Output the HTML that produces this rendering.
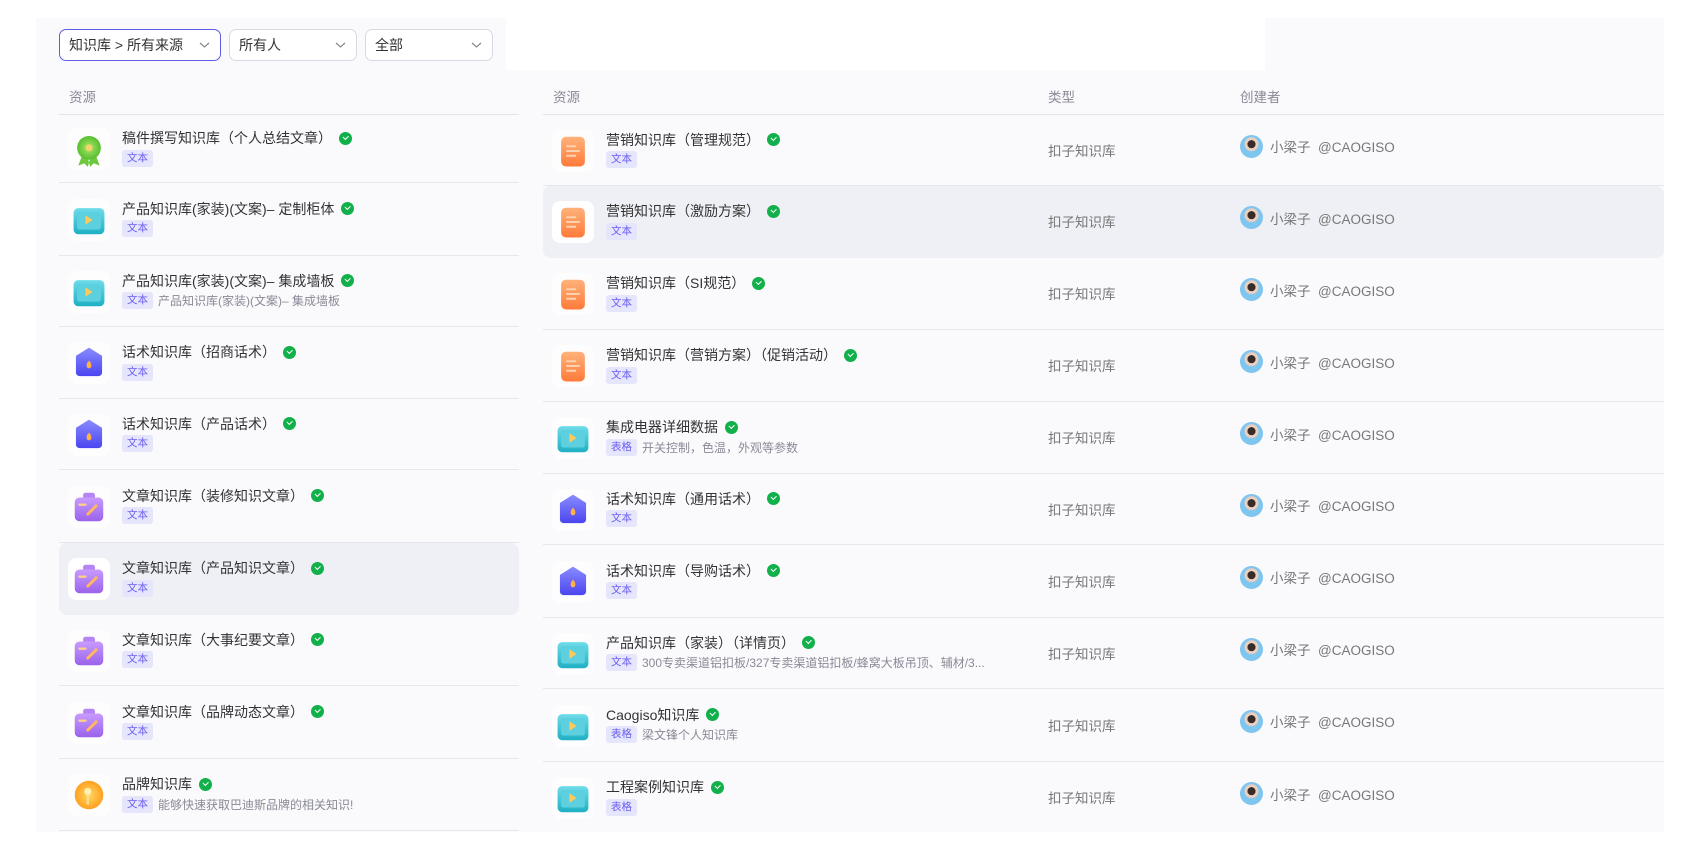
<!DOCTYPE html>
<html><head><meta charset="utf-8"><style>
*{box-sizing:border-box;margin:0;padding:0}
body{width:1700px;height:850px;background:#fff;position:relative;overflow:hidden;font-family:"Liberation Sans","Noto Sans CJK SC",sans-serif;color:#333}
.bg{position:absolute;background:#fafafd}
.dd{position:absolute;top:29px;height:32px;border:1px solid #d9d9e6;border-radius:7px;background:#fff;font-size:14px;line-height:30px;padding-left:9px;color:#333}
.dd.sel{border-color:#5b5ee6}
.dd svg{position:absolute;right:10px;top:11px}
.hd{position:absolute;top:86px;font-size:13.5px;color:#8a8a96}
.row{position:absolute;border-bottom:1px solid #e6e6ee}
.row.hl{background:#eff0f6;border-radius:8px;border-bottom-color:transparent}
.tile{position:absolute;left:9px;width:42px;height:42px;border-radius:8px;background:#fff}
.row:not(.hl) .tile{background:rgba(255,255,255,.6)}
.tile svg{position:absolute;left:2px;top:2px}
.ttl{position:absolute;left:63px;font-size:14px;color:#333;white-space:nowrap;display:flex;align-items:center}
.ck{display:inline-block;width:13px;height:13px;border-radius:50%;background:#12b04a;margin-left:7px;position:relative}
.ck:after{content:"";position:absolute;left:4px;top:3px;width:4px;height:2.5px;border-left:1.5px solid #fff;border-bottom:1.5px solid #fff;transform:rotate(-45deg)}
.sub{position:absolute;left:63px;font-size:12px;color:#8a8a96;white-space:nowrap;display:flex;align-items:center}
.tag{display:inline-block;background:#e5e5fb;color:#6a5ef0;font-size:10.5px;height:17px;line-height:17px;padding:0 5px;border-radius:3px;margin-right:5px}
.typ{position:absolute;left:505px;font-size:13.5px;color:#777}
.usr{position:absolute;left:697px;font-size:13.5px;color:#777;display:flex;align-items:center}
.av{width:23px;height:23px;border-radius:50%;background:radial-gradient(circle at 50% 40%,#3a2b28 0 22%,#e8cfc0 23% 38%,#7ec5ef 40%);margin-right:7px}
</style></head><body>
<div class="bg" style="left:36px;top:18px;width:470px;height:60px"></div>
<div class="bg" style="left:1265px;top:18px;width:399px;height:60px"></div>
<div class="bg" style="left:36px;top:70px;width:1628px;height:762px"></div>

<div class="dd sel" style="left:59px;width:162px">知识库 &gt; 所有来源<svg width="11" height="8" viewBox="0 0 11 8"><path d="M1 2l4.5 4 4.5-4" fill="none" stroke="#888" stroke-width="1.2"/></svg></div>
<div class="dd" style="left:229px;width:128px">所有人<svg width="11" height="8" viewBox="0 0 11 8"><path d="M1 2l4.5 4 4.5-4" fill="none" stroke="#888" stroke-width="1.2"/></svg></div>
<div class="dd" style="left:365px;width:128px">全部<svg width="11" height="8" viewBox="0 0 11 8"><path d="M1 2l4.5 4 4.5-4" fill="none" stroke="#888" stroke-width="1.2"/></svg></div>

<div class="hd" style="left:69px">资源</div>
<div class="hd" style="left:553px">资源</div>
<div class="hd" style="left:1048px">类型</div>
<div class="hd" style="left:1240px">创建者</div>
<div style="position:absolute;left:59px;top:114px;width:460px;border-top:1px solid #e3e3ec"></div>
<div style="position:absolute;left:543px;top:114px;width:1121px;border-top:1px solid #e3e3ec"></div>

<svg width="0" height="0" style="position:absolute">
<defs>
<linearGradient id="gv" x1="0" y1="0" x2="0" y2="1"><stop offset="0" stop-color="#6fdcea"/><stop offset="1" stop-color="#1fb0c4"/></linearGradient>
<linearGradient id="gh" x1="0" y1="0" x2="0" y2="1"><stop offset="0" stop-color="#8a8cff"/><stop offset="1" stop-color="#4a45f0"/></linearGradient>
<linearGradient id="gb" x1="0" y1="0" x2="0" y2="1"><stop offset="0" stop-color="#c89bff"/><stop offset="1" stop-color="#9a62ec"/></linearGradient>
<linearGradient id="go" x1="0" y1="0" x2="0" y2="1"><stop offset="0" stop-color="#ffb27a"/><stop offset="1" stop-color="#ff7a3a"/></linearGradient>
<radialGradient id="gg"><stop offset="0" stop-color="#a8e86a"/><stop offset="1" stop-color="#58be30"/></radialGradient>
<radialGradient id="gy"><stop offset="0" stop-color="#ffd860"/><stop offset="1" stop-color="#ffa020"/></radialGradient>
<g id="i-med"><path d="M10 22l-3 8 5-2 3 3 2-7zM22 22l3 8-5-2-3 3-2-7z" fill="#6cc83c"/><circle cx="16" cy="15" r="10" fill="url(#gg)"/><circle cx="16" cy="15" r="3" fill="#f6d36a"/></g>
<g id="i-vid"><rect x="3" y="6" width="26" height="22" rx="4" fill="url(#gv)"/><rect x="6" y="9" width="20" height="15" rx="2" fill="#5cd0df"/><path d="M13 12v8l6-4z" fill="#ffc85a"/></g>
<g id="i-hex"><path d="M16 3l11 7v14a3 3 0 0 1-3 3H8a3 3 0 0 1-3-3V10z" fill="url(#gh)"/><path d="M16 14c2 2 2 3.5 2 4.5a2 2 0 0 1-4 0c0-1 0-2.5 2-4.5z" fill="#ffb04a"/></g>
<g id="i-bag"><rect x="11" y="4" width="10" height="6" rx="2" fill="#b584f6"/><rect x="4" y="8" width="24" height="20" rx="4" fill="url(#gb)"/><path d="M8 14h5" stroke="#ffd08a" stroke-width="2" stroke-linecap="round"/><path d="M15 22l7-7" stroke="#ffb860" stroke-width="2.5" stroke-linecap="round"/></g>
<g id="i-doc"><rect x="6" y="4" width="20" height="25" rx="4" fill="url(#go)"/><path d="M11 12h7M11 16h10M11 20h7" stroke="#ffd2b0" stroke-width="1.6" stroke-linecap="round"/></g>
<g id="i-bulb"><circle cx="16" cy="16" r="12" fill="url(#gy)"/><circle cx="15" cy="13" r="3" fill="#fff1b0"/><path d="M15 16v8" stroke="#ffe08a" stroke-width="2"/></g>
</defs></svg>

<div id="L"></div>
<div id="R"></div>

<script>
function row(x,w,top,h,ic,title,tag,desc,hl,right,last){
 var mid=h/2;
 var s='<div class="row'+(hl?' hl':'')+'" style="left:'+x+'px;top:'+top+'px;width:'+w+'px;height:'+h+'px'+(last?';border-bottom-color:transparent':'')+'">';
 s+='<div class="tile" style="top:'+(mid-21)+'px"><svg width="38" height="38" viewBox="0 0 32 32"><use href="#i-'+ic+'"/></svg></div>';
 s+='<div class="ttl" style="top:'+(mid-21)+'px;height:20px">'+title+'<span class="ck"></span></div>';
 if(tag) s+='<div class="sub" style="top:'+(mid)+'px;height:18px"><span class="tag">'+tag+'</span>'+(desc||'')+'</div>';
 if(right){s+='<div class="typ" style="top:'+(mid-11)+'px">扣子知识库</div><div class="usr" style="top:'+(mid-16)+'px"><span class="av"></span>小梁子&nbsp; @CAOGISO</div>';}
 return s+'</div>';
}
var Ly=[115,183,256,327,399,470,543,615,686,759,831];
var Ld=[["med","稿件撰写知识库（个人总结文章）","文本"],["vid","产品知识库(家装)(文案)– 定制柜体","文本"],["vid","产品知识库(家装)(文案)– 集成墙板","文本","产品知识库(家装)(文案)– 集成墙板"],["hex","话术知识库（招商话术）","文本"],["hex","话术知识库（产品话术）","文本"],["bag","文章知识库（装修知识文章）","文本"],["bag","文章知识库（产品知识文章）","文本",null,1],["bag","文章知识库（大事纪要文章）","文本"],["bag","文章知识库（品牌动态文章）","文本"],["bulb","品牌知识库","文本","能够快速获取巴迪斯品牌的相关知识!"]];
var h='';
for(var i=0;i<10;i++){var d=Ld[i];h+=row(59,460,Ly[i],Ly[i+1]-Ly[i],d[0],d[1],d[2],d[3],d[4],0,0);}
document.getElementById('L').innerHTML=h;
var Ry=[115,186,258,330,402,474,545,618,689,762,834];
var Rd=[["doc","营销知识库（管理规范）","文本"],["doc","营销知识库（激励方案）","文本",null,1],["doc","营销知识库（SI规范）","文本"],["doc","营销知识库（营销方案）（促销活动）","文本"],["vid","集成电器详细数据","表格","开关控制，色温，外观等参数"],["hex","话术知识库（通用话术）","文本"],["hex","话术知识库（导购话术）","文本"],["vid","产品知识库（家装）（详情页）","文本","300专卖渠道铝扣板/327专卖渠道铝扣板/蜂窝大板吊顶、辅材/3..."],["vid","Caogiso知识库","表格","梁文锋个人知识库"],["vid","工程案例知识库","表格"]];
h='';
for(var i=0;i<10;i++){var d=Rd[i];h+=row(543,1121,Ry[i],Ry[i+1]-Ry[i],d[0],d[1],d[2],d[3],d[4],1,i==9);}
document.getElementById('R').innerHTML=h;
</script>
</body></html>
